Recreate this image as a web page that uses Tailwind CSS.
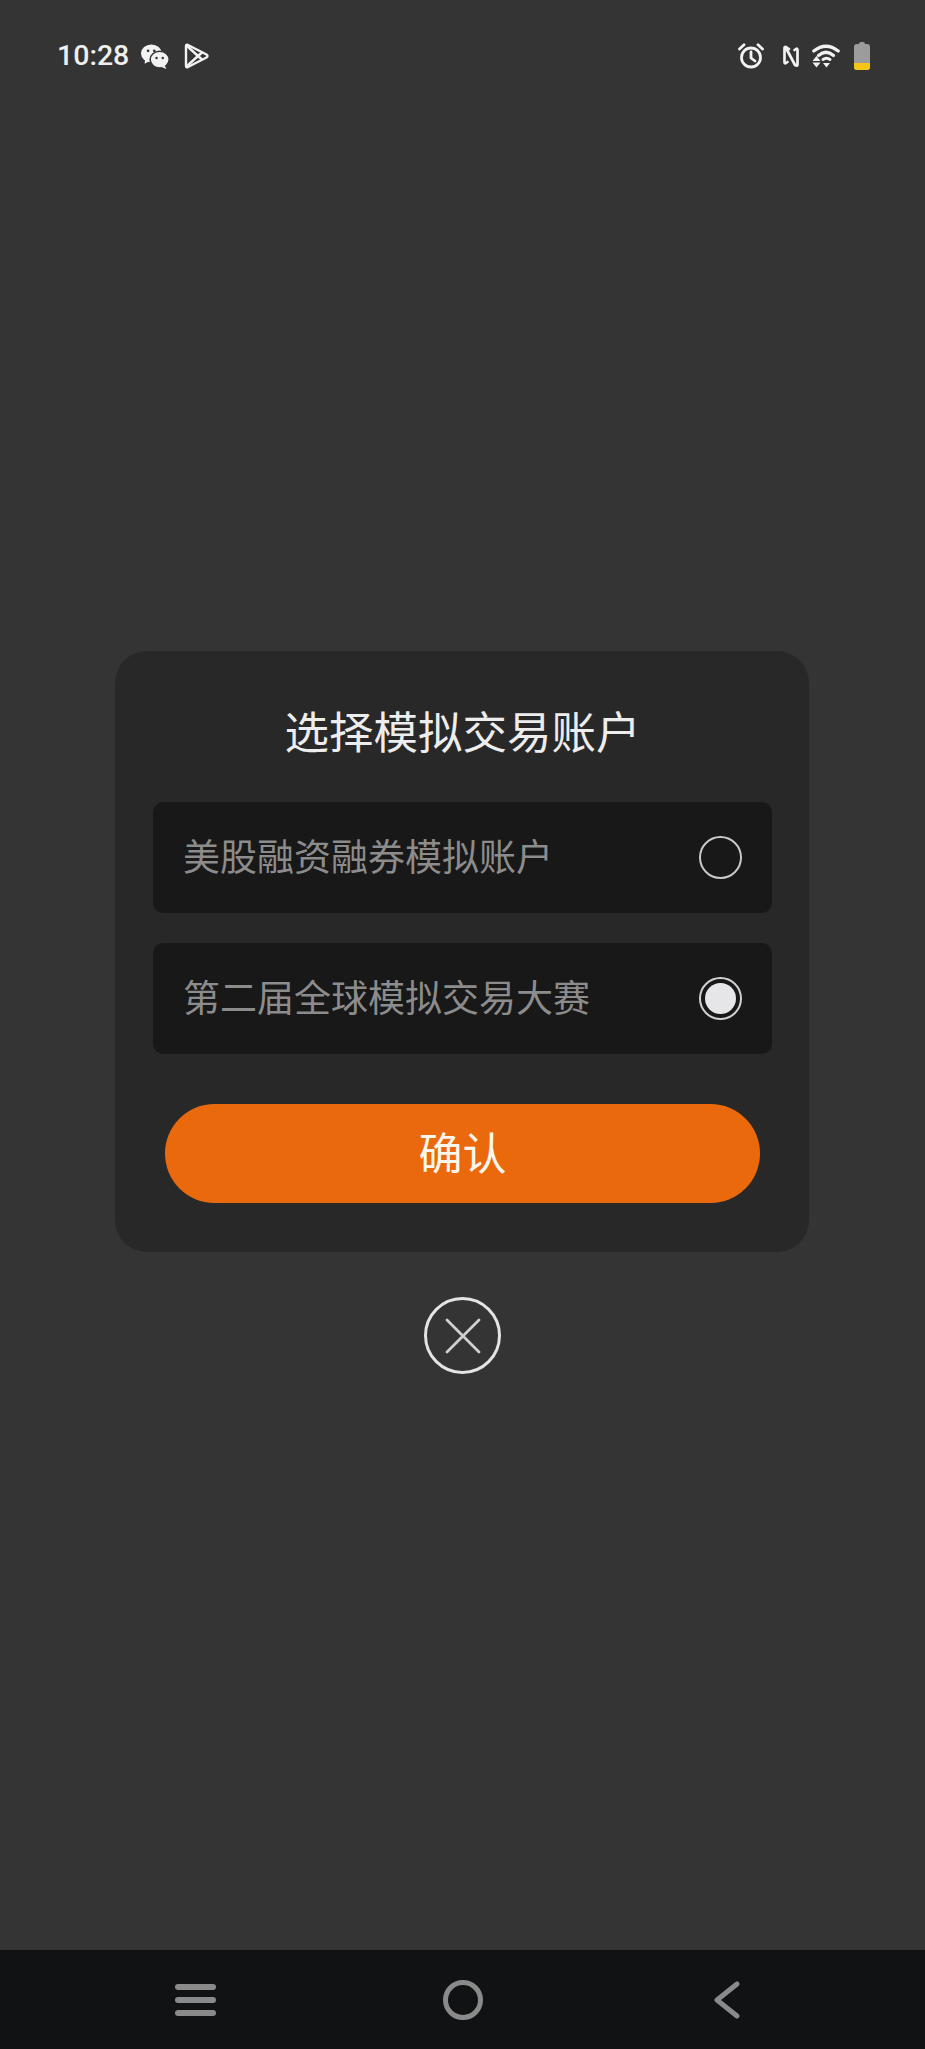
<!doctype html>
<html lang="zh-CN">
<head>
<meta charset="utf-8">
<script src="https://cdn.jsdelivr.net/npm/@tailwindcss/browser@4"></script>
</head>
<body class="m-0">
<div class="w-[925px] h-[2049px] bg-[#343434] flex flex-col overflow-hidden font-['Noto_Sans_CJK_SC','Noto_Sans',sans-serif]">
  <header class="h-[112px] flex items-center justify-between pl-[57px] pr-[55px] shrink-0">
    <div class="flex items-center">
      <span class="font-['Roboto',sans-serif] font-medium text-[28.5px] leading-none text-[#efefef]">10:28</span>
      <svg class="ml-[12px] w-[28px] h-[25px]" viewBox="0 0 27 24">
        <ellipse cx="10" cy="9" rx="10" ry="8.6" fill="#f2f2f2"/>
        <path d="M4 14 L3.5 19 L9 16 Z" fill="#f2f2f2"/>
        <ellipse cx="18" cy="15" rx="9.2" ry="8" fill="#f2f2f2" stroke="#343434" stroke-width="1.5"/>
        <path d="M23 21 L24.5 24 L19 22 Z" fill="#f2f2f2"/>
        <circle cx="6.8" cy="6.5" r="1.3" fill="#343434"/><circle cx="12.8" cy="6.5" r="1.3" fill="#343434"/>
        <circle cx="15" cy="13.5" r="1.2" fill="#343434"/><circle cx="21" cy="13.5" r="1.2" fill="#343434"/>
      </svg>
      <svg class="ml-[15px] w-[25px] h-[26px]" viewBox="0 0 25 26" fill="none" stroke="#f2f2f2" stroke-width="2.4" stroke-linejoin="round" stroke-linecap="round">
        <path d="M2 3 Q2 1.3 4 2 L22.5 11.5 Q24.5 13 22.5 14.5 L4 24 Q2 24.7 2 23 Z"/>
        <path d="M2.5 2.5 L14 13 L2.5 23.5 M18 9.5 L14 13 L18 16.5"/>
      </svg>
    </div>
    <div class="flex items-center">
      <svg class="w-[26px] h-[26px]" viewBox="0 0 26 26" fill="none" stroke="#f2f2f2" stroke-width="2.8" stroke-linecap="round" stroke-linejoin="round">
        <circle cx="13" cy="14.5" r="9.5"/>
        <path d="M13 9 V15 L17 18 M1.5 6 L6 1.8 M24.5 6 L20 1.8"/>
      </svg>
      <svg class="ml-[19px] w-[16px] h-[23px]" viewBox="0 0 16 23" fill="none" stroke="#f2f2f2" stroke-width="2.7" stroke-linecap="round" stroke-linejoin="round">
        <path d="M6 4 L3 2 Q1.5 1.5 1.5 3 V17 Q1.5 19 3 18 L4.5 17"/>
        <path d="M3 3 L12 20 Q14.5 21.5 14.5 19.5 V5 Q14.5 3 13 4 L11.5 5"/>
      </svg>
      <svg class="ml-[13px] w-[28px] h-[24px]" viewBox="0 0 28 24" fill="none" stroke="#f2f2f2" stroke-linecap="round">
        <path d="M1.8 7 Q14 -2.5 26.2 7" stroke-width="3.2"/>
        <path d="M6.5 11.5 Q14 5 21.5 11.5" stroke-width="3.2"/>
        <path d="M11 15.5 Q14.5 13 18 15.5" stroke-width="3"/>
        <path d="M0.5 17 L4.5 12 L8.5 17 Z M0.5 18.5 L4.5 23.5 L8.5 18.5 Z M11 19 H18 L14.5 23.5 Z" fill="#f2f2f2" stroke="none"/>
      </svg>
      <div class="ml-[14px] w-[16px] h-[28px] flex flex-col items-center">
        <div class="w-[6px] h-[2px] bg-[#9c9c9c] rounded-t-sm"></div>
        <div class="w-[16px] h-[26px] rounded-[3px] bg-[#9c9c9c] flex flex-col justify-end overflow-hidden">
          <div class="h-[7px] bg-[#f5c518]"></div>
        </div>
      </div>
    </div>
  </header>

  <main class="flex-1 flex flex-col pt-[539px]">
    <section class="self-start ml-[115px] w-[694px] rounded-[32px] bg-[#282828] pl-[38px] pr-[37px] pt-[52px] pb-[49px]">
      <h1 class="h-[60px] mb-[39px] pb-[5px] flex items-center justify-center text-[44.5px] leading-none font-normal text-[#ededed]">选择模拟交易账户</h1>
      <div class="flex flex-col gap-[30px]">
        <div class="h-[111px] rounded-[10px] bg-[#181818] flex items-center justify-between pl-[30px] pr-[30px]">
          <span class="pb-[5px] text-[37px] leading-none text-[#8c8c8c]">美股融资融券模拟账户</span>
          <span class="w-[43px] h-[43px] rounded-full border-2 border-[#c8c8c8]"></span>
        </div>
        <div class="h-[111px] rounded-[10px] bg-[#181818] flex items-center justify-between pl-[30px] pr-[30px]">
          <span class="pb-[5px] text-[37px] leading-none text-[#8c8c8c]">第二届全球模拟交易大赛</span>
          <span class="w-[43px] h-[43px] rounded-full border-2 border-[#d0d0d0] flex items-center justify-center">
            <span class="w-[31px] h-[31px] rounded-full bg-[#e6e6e8]"></span>
          </span>
        </div>
      </div>
      <button class="mt-[50px] ml-[12px] w-[595px] h-[99px] rounded-full bg-[#ea690c] pb-[5px] text-[44px] leading-none text-[#fdf6ee] flex items-center justify-center">确认</button>
    </section>
    <button class="self-center mt-[45px] w-[77px] h-[77px] rounded-full border-[3.5px] border-[#e4e4e4] flex items-center justify-center" aria-label="关闭">
      <svg class="w-[36px] h-[36px]" viewBox="0 0 36 36" fill="none" stroke="#cfcfcf" stroke-width="2.8" stroke-linecap="round">
        <path d="M2 2 L34 34 M34 2 L2 34"/>
      </svg>
    </button>
  </main>

  <nav class="h-[99px] shrink-0 bg-[#101214] flex items-center pl-[175px]">
    <div class="flex flex-col gap-[7px] w-[41px]">
      <span class="h-[6px] rounded-full bg-[#8a8a8a]"></span>
      <span class="h-[6px] rounded-full bg-[#8a8a8a]"></span>
      <span class="h-[6px] rounded-full bg-[#8a8a8a]"></span>
    </div>
    <span class="ml-[227px] w-[40px] h-[40px] rounded-full border-[5px] border-[#8a8a8a]"></span>
    <svg class="ml-[231px] w-[26px] h-[38px]" viewBox="0 0 26 38" fill="none" stroke="#8a8a8a" stroke-width="5" stroke-linecap="round" stroke-linejoin="round">
      <path d="M23 3 L3 19 L23 35"/>
    </svg>
  </nav>
</div>
</body>
</html>
